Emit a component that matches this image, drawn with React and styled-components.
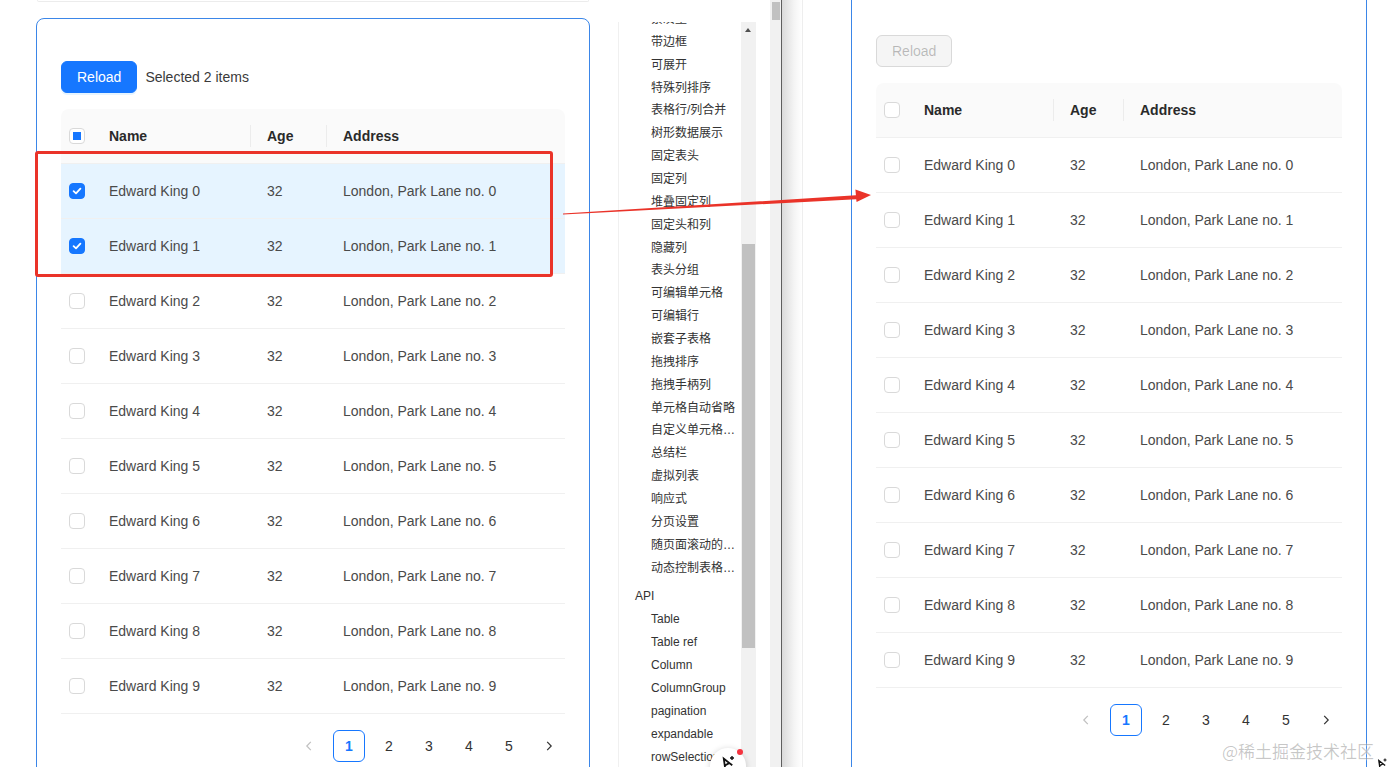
import React from 'react'
import styled, { createGlobalStyle, css } from 'styled-components'

const GlobalStyle = createGlobalStyle`
  html, body {
    margin: 0;
    padding: 0;
    background: #fff;
  }
  body {
    font-family: "Liberation Sans", "Noto Sans CJK SC", sans-serif;
    color: rgba(0, 0, 0, 0.88);
  }
  * { box-sizing: border-box; }
`

const BLUE = '#1677ff'

const Page = styled.div`
  position: relative;
  display: flex;
  width: 1388px;
  height: 767px;
  overflow: hidden;
  background: #fff;
`

const LeftPane = styled.div`
  flex: none;
  width: 618px;
  padding-left: 36px;
`

const TopStub = styled.div`
  width: 552px;
  height: 2px;
  margin-left: 1px;
  border: 1px solid #ececec;
  border-top: none;
  border-radius: 0 0 6px 6px;
`

const Card = styled.div`
  width: ${p => p.$width}px;
  border: 1px solid #3b86e8;
  border-radius: 8px;
  margin-top: 16px;
  padding: 42px 24px 0;
  height: 800px;
  ${p => p.$open && css`
    margin-top: 0;
    border-top: none;
    border-radius: 0 0 8px 8px;
    padding-top: 35px;
  `}
`

const Toolbar = styled.div`
  display: flex;
  align-items: center;
  gap: 8px;
  margin-bottom: 16px;
  font-size: 14px;
`

const Button = styled.button`
  height: 32px;
  padding: 0 15px;
  border-radius: 6px;
  font-family: inherit;
  font-size: 14px;
  border: 1px solid ${p => (p.disabled ? '#d9d9d9' : BLUE)};
  background: ${p => (p.disabled ? '#f5f5f5' : BLUE)};
  color: ${p => (p.disabled ? 'rgba(0,0,0,0.25)' : '#fff')};
  box-shadow: ${p => (p.disabled ? 'none' : '0 2px 0 rgba(5,145,255,0.1)')};
`

const Hint = styled.span`
  color: #3a3a3a;
`

const Table = styled.div`
  font-size: 14px;
`

const HeaderRow = styled.div`
  display: grid;
  grid-template-columns: ${p => p.$cols};
  height: 55px;
  background: #fafafa;
  border-bottom: 1px solid #f0f0f0;
  border-radius: 8px 8px 0 0;
  color: #2a2a2a;
  font-weight: 600;
`

const HeadCell = styled.div`
  position: relative;
  display: flex;
  align-items: center;
  padding: 0 16px;
  ${p => p.$sel && css`padding: 0 8px;`}
  ${p => p.$sep && css`
    &::before {
      content: '';
      position: absolute;
      right: 0;
      top: 50%;
      width: 1px;
      height: 22px;
      transform: translateY(-50%);
      background: #ececec;
    }
  `}
`

const Row = styled.div`
  display: grid;
  grid-template-columns: ${p => p.$cols};
  height: 55px;
  border-bottom: 1px solid #f0f0f0;
  background: ${p => (p.$selected ? '#e6f4ff' : '#fff')};
  color: #4a4a4a;
`

const Cell = styled.div`
  display: flex;
  align-items: center;
  padding: 0 16px;
  white-space: nowrap;
  ${p => p.$sel && css`padding: 0 8px;`}
`

const Box = styled.span`
  position: relative;
  display: inline-flex;
  align-items: center;
  justify-content: center;
  width: 16px;
  height: 16px;
  border-radius: 4px;
  border: 1px solid ${p => (p.$checked ? BLUE : '#d9d9d9')};
  background: ${p => (p.$checked ? BLUE : '#fff')};
  ${p => p.$half && css`
    &::after {
      content: '';
      width: 8px;
      height: 8px;
      background: ${BLUE};
    }
  `}
`

const Checkbox = ({ checked, half }) => (
  <Box $checked={checked} $half={half}>
    {checked && (
      <svg width="10" height="10" viewBox="0 0 10 10">
        <path d="M1.6 5.2 L4 7.4 L8.4 2.6" fill="none" stroke="#fff" strokeWidth="1.8" strokeLinecap="round" strokeLinejoin="round" />
      </svg>
    )}
  </Box>
)

const Pager = styled.div`
  display: flex;
  justify-content: flex-end;
  gap: 8px;
  margin-top: 16px;
`

const PageItem = styled.div`
  display: flex;
  align-items: center;
  justify-content: center;
  width: 32px;
  height: 32px;
  border-radius: 6px;
  font-size: 14px;
  color: ${p => (p.$disabled ? 'rgba(0,0,0,0.25)' : '#333')};
  border: 1px solid ${p => (p.$active ? BLUE : 'transparent')};
  ${p => p.$active && css`
    color: ${BLUE};
    font-weight: 600;
  `}
`

const Chevron = ({ dir }) => (
  <svg width="12" height="12" viewBox="0 0 12 12">
    <path
      d={dir === 'left' ? 'M7.8 1.8 L3.8 6 L7.8 10.2' : 'M4.2 1.8 L8.2 6 L4.2 10.2'}
      fill="none"
      stroke="currentColor"
      strokeWidth="1.2"
    />
  </svg>
)

const rows = Array.from({ length: 10 }, (_, i) => ({
  key: i,
  name: `Edward King ${i}`,
  age: 32,
  address: `London, Park Lane no. ${i}`,
}))

function DataTable({ cols, selected, disabled }) {
  const count = selected.length
  return (
    <>
      <Toolbar>
        <Button disabled={disabled}>Reload</Button>
        {count > 0 && <Hint>Selected {count} items</Hint>}
      </Toolbar>
      <Table>
        <HeaderRow $cols={cols}>
          <HeadCell $sel>
            <Checkbox half={count > 0} />
          </HeadCell>
          <HeadCell $sep>Name</HeadCell>
          <HeadCell $sep>Age</HeadCell>
          <HeadCell>Address</HeadCell>
        </HeaderRow>
        {rows.map(r => {
          const on = selected.includes(r.key)
          return (
            <Row key={r.key} $cols={cols} $selected={on}>
              <Cell $sel>
                <Checkbox checked={on} />
              </Cell>
              <Cell>{r.name}</Cell>
              <Cell>{r.age}</Cell>
              <Cell>{r.address}</Cell>
            </Row>
          )
        })}
      </Table>
      <Pager>
        <PageItem $disabled>
          <Chevron dir="left" />
        </PageItem>
        {[1, 2, 3, 4, 5].map(n => (
          <PageItem key={n} $active={n === 1}>{n}</PageItem>
        ))}
        <PageItem>
          <Chevron dir="right" />
        </PageItem>
      </Pager>
    </>
  )
}

/* middle: docs anchor nav + scrollbars */

const Nav = styled.div`
  flex: none;
  width: 123px;
  margin-top: 22px;
  border-left: 1px solid #f0f0f0;
  overflow: hidden;
`

const NavList = styled.ul`
  list-style: none;
  margin: -14px 0 0;
  padding: 0;
  font-size: 12px;
  color: #333;
`

const NavItem = styled.li`
  height: 22.87px;
  line-height: 22.87px;
  padding: 0 5px 0 ${p => (p.$group ? 16 : 32)}px;
  margin-top: ${p => (p.$group ? 6 : 0)}px;
  white-space: nowrap;
  overflow: hidden;
  text-overflow: ellipsis;
  font-family: "Liberation Sans", "Noto Sans CJK SC", sans-serif;
`

const NavTrack = styled.div`
  position: relative;
  flex: none;
  width: 15px;
  margin-top: 22px;
  background: #f1f1f1;
`

const UpArrow = styled.div`
  position: absolute;
  top: 6px;
  left: 4px;
  width: 0;
  height: 0;
  border-left: 3.5px solid transparent;
  border-right: 3.5px solid transparent;
  border-bottom: 4px solid #505050;
`

const Thumb = styled.div`
  position: absolute;
  left: ${p => p.$left}px;
  right: ${p => p.$left}px;
  top: ${p => p.$top}px;
  height: ${p => p.$height}px;
  background: #c1c1c1;
`

const Spacer = styled.div`
  flex: none;
  width: ${p => p.$w}px;
`

const PageTrack = styled.div`
  position: relative;
  flex: none;
  width: 11px;
  background: #f1f1f1;
`

const WindowEdge = styled.div`
  flex: none;
  width: 21px;
  border-left: 1px solid #5e5e5e;
  background: linear-gradient(to right, #dadada, #f4f4f4 60%, #fff);
`

const FaintLine = styled.div`
  flex: none;
  width: 49px;
  border-left: 1px solid #eeeeee;
`

const navItems = [
  '紧凑型', '带边框', '可展开', '特殊列排序', '表格行/列合并', '树形数据展示', '固定表头',
  '固定列', '堆叠固定列', '固定头和列', '隐藏列', '表头分组', '可编辑单元格', '可编辑行',
  '嵌套子表格', '拖拽排序', '拖拽手柄列', '单元格自动省略', '自定义单元格省略提示', '总结栏',
  '虚拟列表', '响应式', '分页设置', '随页面滚动的固定表头和滚动条', '动态控制表格属性',
]
const apiItems = ['Table', 'Table ref', 'Column', 'ColumnGroup', 'pagination', 'expandable', 'rowSelection']

/* overlays: annotation and floating things */

const Annotation = styled.div`
  position: absolute;
  left: 35px;
  top: 151px;
  width: 518px;
  height: 126px;
  border: 3px solid #ea3329;
  border-radius: 3px;
  pointer-events: none;
`

const Overlay = styled.svg`
  position: absolute;
  left: 0;
  top: 0;
  pointer-events: none;
`

const Fab = styled.div`
  position: absolute;
  left: 710px;
  top: 748px;
  width: 36px;
  height: 36px;
  border-radius: 50%;
  background: #fff;
  box-shadow: 0 1px 6px rgba(0, 0, 0, 0.18);
  display: flex;
  justify-content: center;
  padding-top: 6px;
  &::after {
    content: '';
    position: absolute;
    right: 3px;
    top: 1px;
    width: 6px;
    height: 6px;
    border-radius: 50%;
    background: #f5333f;
  }
`

const Watermark = styled.div`
  position: absolute;
  left: 1222px;
  top: 738px;
  font-family: "Noto Sans CJK SC", sans-serif;
  font-size: 17px;
  color: rgba(0, 0, 0, 0.22);
  text-shadow: 0 0 2px #fff;
  white-space: nowrap;
`

const CornerMark = styled.div`
  position: absolute;
  left: 1376px;
  top: 755px;
`

const PenIcon = ({ size = 16 }) => (
  <svg width={size} height={size} viewBox="0 0 16 16">
    <path d="M2 13 L6 3 L10 13 M3.6 9.5 H8.4" fill="none" stroke="#111" strokeWidth="1.8" transform="rotate(-30 8 8)" />
    <path d="M12 2 V6 M10 4 H14" stroke="#111" strokeWidth="1.4" />
  </svg>
)

export default function App() {
  return (
    <Page>
      <GlobalStyle />
      <LeftPane>
        <TopStub />
        <Card $width={554}>
          <DataTable cols="32px 158px 76px 1fr" selected={[0, 1]} />
        </Card>
      </LeftPane>

      <Nav>
        <NavList>
          {navItems.map(t => (
            <NavItem key={t}>{t}</NavItem>
          ))}
          <NavItem $group>API</NavItem>
          {apiItems.map(t => (
            <NavItem key={t}>{t}</NavItem>
          ))}
        </NavList>
      </Nav>
      <NavTrack>
        <UpArrow />
        <Thumb $left={1} $top={222} $height={404} />
      </NavTrack>
      <Spacer $w={14} />
      <PageTrack>
        <Thumb $left={1.5} $top={2} $height={18} />
      </PageTrack>
      <WindowEdge />
      <FaintLine />

      <Card $open $width={516}>
        <DataTable cols="32px 146px 70px 1fr" selected={[]} disabled />
      </Card>

      <Annotation />
      <Overlay width="1388" height="767" viewBox="0 0 1388 767">
        <polygon
          points="563,213.6 855.9,195.3 855.4,189.6 871,195 856.6,202 856.2,199.2 563,214.6"
          fill="#ea3329"
        />
      </Overlay>
      <Fab>
        <PenIcon />
      </Fab>
      <Watermark>@稀土掘金技术社区</Watermark>
      <CornerMark>
        <PenIcon size={12} />
      </CornerMark>
    </Page>
  )
}
